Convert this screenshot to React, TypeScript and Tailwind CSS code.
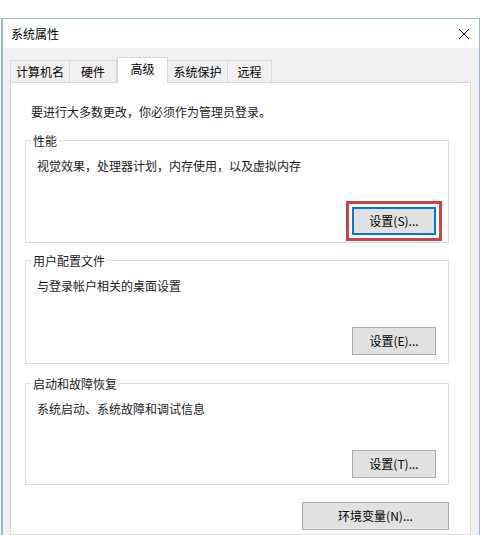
import React from "react";

const font = { fontFamily: '"Noto Sans CJK SC", "Microsoft YaHei", "Liberation Sans", sans-serif' };

function Btn({ label, focused, wide }: { label: string; focused?: boolean; wide?: boolean }) {
  return (
    <button
      className={
        (wide ? "w-[147px] " : "w-[84px] ") +
        "h-[28px] bg-[#e1e1e1] text-[12px] text-black leading-none flex items-center justify-center " +
        (focused
          ? "border-2 border-[#0078d7] outline-3 outline-solid outline-[#d0404a] outline-offset-3"
          : "border border-[#adadad]")
      }
    >
      {label}
    </button>
  );
}

function Group({
  title,
  desc,
  btn,
  focused,
  cls,
}: {
  title: string;
  desc: string;
  btn: string;
  focused?: boolean;
  cls: string;
}) {
  return (
    <div className={"border border-[#dcdcdc] flex flex-col " + cls}>
      <span className="self-start ml-[5px] -mt-[9px] px-[2px] bg-white text-[12px] leading-[17px] text-[#1a1a1a]">
        {title}
      </span>
      <div className="mt-[8px] pl-[11px] text-[12px] leading-[17px] text-[#1a1a1a]">{desc}</div>
      <div className="mt-[33px] flex justify-end pr-[12px]">
        <Btn label={btn} focused={focused} />
      </div>
    </div>
  );
}

export default function App() {
  const tabs = ["计算机名", "硬件", "高级", "系统保护", "远程"];
  const widths = ["w-[60px]", "w-[47px]", "w-[51px]", "w-[60px]", "w-[44px]"];
  return (
    <div className="w-[483px] h-[535px] bg-white overflow-hidden flex flex-col" style={font}>
      <div className="h-[18px] shrink-0" />
      <div className="ml-[1px] w-[479px] flex-1 flex flex-col border-l-2 border-r border-t border-[#9ab6d3] bg-[#f0f0f0]">
        {/* title bar */}
        <div className="h-[29px] bg-white flex items-center justify-between pl-[8px] pr-[9px] shrink-0">
          <span className="text-[12px] text-black leading-none">系统属性</span>
          <svg width="12" height="12" viewBox="0 0 12 12" className="mt-[1px]">
            <path d="M1 1 L11 11 M11 1 L1 11" stroke="#111" strokeWidth="1" />
          </svg>
        </div>
        {/* body */}
        <div className="flex-1 flex flex-col pl-[7px] pr-[8px] pt-[9px]">
          {/* tabs */}
          <div className="flex items-end h-[25px] relative z-10">
            {tabs.map((t, i) => {
              const sel = i === 2;
              return (
                <div
                  key={t}
                  className={
                    widths[i] +
                    " flex items-center justify-center text-[12px] leading-none text-black border-[#d9d9d9] " +
                    (sel
                      ? "h-[26px] bg-white border-l border-r border-t -mb-[1px] pb-[4px]"
                      : "h-[22px] bg-[#f0f0f0] border-t border-r " + (i === 0 ? "border-l" : "") + " pt-[1px]")
                  }
                >
                  {t}
                </div>
              );
            })}
          </div>
          {/* panel */}
          <div className="flex-1 bg-white border border-[#d9d9d9] flex flex-col pl-[14px] pr-[21px] pt-[20px]">
            <div className="pl-[6px] text-[12px] leading-[17px] text-[#1a1a1a]">
              要进行大多数更改，你必须作为管理员登录。
            </div>
            <Group
              cls="mt-[20px] h-[103px]"
              title="性能"
              desc="视觉效果，处理器计划，内存使用，以及虚拟内存"
              btn="设置(S)..."
              focused
            />
            <Group
              cls="mt-[17px] h-[104px]"
              title="用户配置文件"
              desc="与登录帐户相关的桌面设置"
              btn="设置(E)..."
            />
            <Group
              cls="mt-[19px] h-[102px]"
              title="启动和故障恢复"
              desc="系统启动、系统故障和调试信息"
              btn="设置(T)..."
            />
            <div className="mt-[17px] flex justify-end">
              <Btn label="环境变量(N)..." wide />
            </div>
          </div>
        </div>
      </div>
    </div>
  );
}
